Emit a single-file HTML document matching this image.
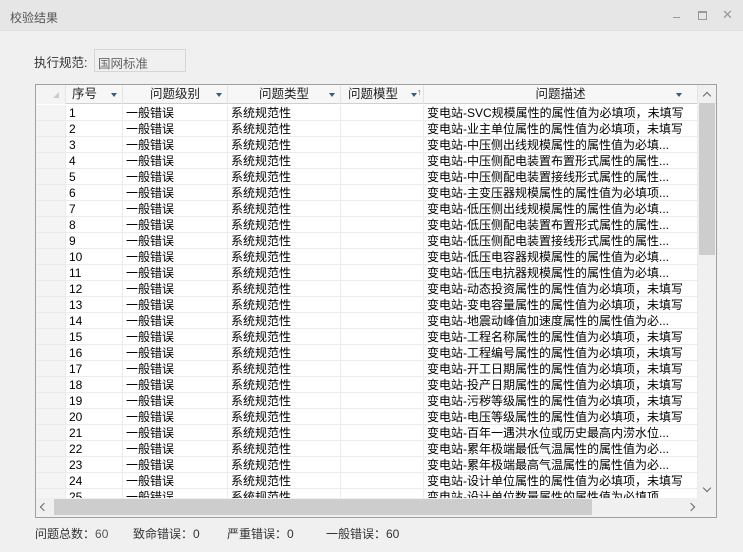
<!DOCTYPE html>
<html><head><meta charset="utf-8">
<style>
*{margin:0;padding:0;box-sizing:border-box}
body{width:743px;height:552px;background:#f0f0f0;font-family:"Liberation Sans","Noto Sans CJK SC",sans-serif;font-size:12px;color:#000;position:relative;overflow:hidden}
.abs{position:absolute}
.title{left:0;top:0;width:743px;height:31px;background:#e6e6e6;border-bottom:1px solid #e0e0e0}
.grid{left:35px;top:84px;width:682px;height:434px;border:1px solid #a0a0a0;background:#fff;overflow:hidden}
.hdr{left:0;top:0;height:19px;width:662px;background:#f7f7f7;border-bottom:1px solid #d0d0d0}
.hc{position:absolute;top:0;height:19px;line-height:19px;text-align:center;font-size:12.5px;color:#222;border-right:1px solid #e4e4e4}
.arr{position:absolute;top:8px;width:0;height:0;border-left:3px solid transparent;border-right:3px solid transparent;border-top:4px solid #3a5a8a}
.row{position:absolute;left:0;height:16px;width:662px}
.c{position:absolute;top:0;height:16px;line-height:16px;border-right:1px solid #ebebeb;border-bottom:1px solid #ebebeb;white-space:nowrap;overflow:hidden;padding-left:3px;font-size:12px}
.ind{background:#f4f4f4}
.chev{position:absolute;width:6px;height:6px;border-left:1.5px solid #666;border-top:1.5px solid #666}
</style></head><body>
<div class="abs title"></div>
<div class="abs" style="left:10px;top:9px;font-size:12px;color:#555">校验结果</div>
<div class="abs" style="left:673px;top:17px;width:7px;height:1px;background:#999"></div>
<div class="abs" style="left:698px;top:11px;width:9px;height:9px;border:1px solid #999;border-top-width:2px"></div>
<div class="abs" style="left:722px;top:7px;color:#999;font-size:13px">✕</div>
<div class="abs" style="left:34px;top:52px;font-size:12.5px;color:#333">执行规范:</div>
<div class="abs" style="left:94px;top:49px;width:92px;height:23px;border:1px solid #d6d6d6;background:#f0f0f0;color:#666;padding:3px 0 0 3px;font-size:12.5px">国网标准</div>

<div class="abs grid">
<div class="abs hdr">
 <div class="hc" style="left:0;width:30px;background:#f4f4f4"><span style="position:absolute;left:17px;top:7px;border-left:6px solid transparent;border-bottom:6px solid #ccc"></span></div>
 <div class="hc" style="left:30px;width:57px;text-align:left;padding-left:6px">序号<i class="arr" style="left:45px"></i></div>
 <div class="hc" style="left:87px;width:105px">问题级别<i class="arr" style="left:93px"></i></div>
 <div class="hc" style="left:192px;width:113px">问题类型<i class="arr" style="left:101px"></i></div>
 <div class="hc" style="left:305px;width:83px;text-align:left;padding-left:7px">问题模型<i class="arr" style="left:70px"></i><span style="position:absolute;left:76px;top:-2px;font-size:9px;color:#3a5a8a">↑</span></div>
 <div class="hc" style="left:388px;width:274px">问题描述<i class="arr" style="left:252px"></i></div>
</div>
<div id="rows"></div>
<div class="abs" style="left:662px;top:0;width:18px;height:413px;background:#f0f0f0"></div>
<div class="chev" style="left:668px;top:8px;transform:rotate(45deg)"></div>
<div class="abs" style="left:663px;top:18px;width:16px;height:152px;background:#cdcdcd"></div>
<div class="chev" style="left:668px;top:400px;transform:rotate(225deg)"></div>
<div class="abs" style="left:0;top:413px;width:680px;height:19px;background:#f0f0f0"></div>
<div class="chev" style="left:5px;top:419px;transform:rotate(-45deg)"></div>
<div class="abs" style="left:18px;top:414px;width:538px;height:16px;background:#cdcdcd"></div>
<div class="chev" style="left:652px;top:419px;transform:rotate(135deg)"></div>
</div>

<div class="abs" style="left:35px;top:525px;color:#333;font-size:12px">问题总数：<span style="color:#555">60</span></div>
<div class="abs" style="left:133px;top:525px;color:#333;font-size:12px">致命错误：0</div>
<div class="abs" style="left:227px;top:525px;color:#333;font-size:12px">严重错误：0</div>
<div class="abs" style="left:326px;top:525px;color:#333;font-size:12px">一般错误：60</div>

<script>
var d=["变电站-SVC规模属性的属性值为必填项，未填写","变电站-业主单位属性的属性值为必填项，未填写","变电站-中压侧出线规模属性的属性值为必填...","变电站-中压侧配电装置布置形式属性的属性...","变电站-中压侧配电装置接线形式属性的属性...","变电站-主变压器规模属性的属性值为必填项...","变电站-低压侧出线规模属性的属性值为必填...","变电站-低压侧配电装置布置形式属性的属性...","变电站-低压侧配电装置接线形式属性的属性...","变电站-低压电容器规模属性的属性值为必填...","变电站-低压电抗器规模属性的属性值为必填...","变电站-动态投资属性的属性值为必填项，未填写","变电站-变电容量属性的属性值为必填项，未填写","变电站-地震动峰值加速度属性的属性值为必...","变电站-工程名称属性的属性值为必填项，未填写","变电站-工程编号属性的属性值为必填项，未填写","变电站-开工日期属性的属性值为必填项，未填写","变电站-投产日期属性的属性值为必填项，未填写","变电站-污秽等级属性的属性值为必填项，未填写","变电站-电压等级属性的属性值为必填项，未填写","变电站-百年一遇洪水位或历史最高内涝水位...","变电站-累年极端最低气温属性的属性值为必...","变电站-累年极端最高气温属性的属性值为必...","变电站-设计单位属性的属性值为必填项，未填写","变电站-设计单位数量属性的属性值为必填项..."];
var h="";
for(var i=0;i<25;i++){
h+='<div class="row" style="top:'+(20+i*16)+'px">'+
'<div class="c ind" style="left:0;width:30px"></div>'+
'<div class="c" style="left:30px;width:57px">'+(i+1)+'</div>'+
'<div class="c" style="left:87px;width:105px">一般错误</div>'+
'<div class="c" style="left:192px;width:113px">系统规范性</div>'+
'<div class="c" style="left:305px;width:83px"></div>'+
'<div class="c" style="left:388px;width:274px">'+d[i]+'</div></div>';
}
document.getElementById("rows").innerHTML=h;
</script>
</body></html>
